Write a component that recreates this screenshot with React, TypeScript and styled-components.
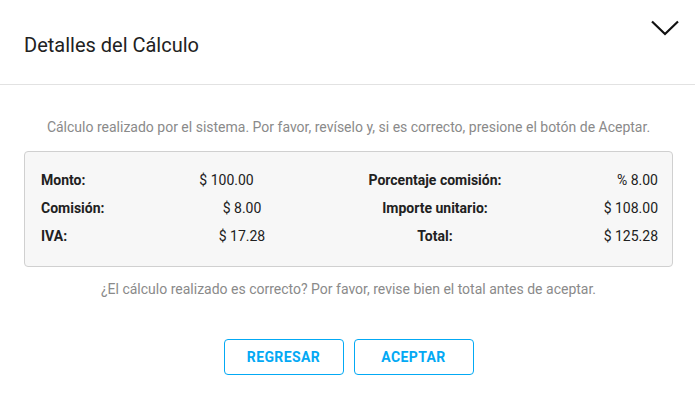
import React from "react";
import styled, { createGlobalStyle } from "styled-components";

const Global = createGlobalStyle`
  html, body { margin: 0; padding: 0; background: #fff; }
  body { font-family: Roboto, "Liberation Sans", Arial, sans-serif; }
  * { box-sizing: border-box; }
`;

const Dialog = styled.div`
  width: 695px;
  height: 404px;
  background: #fff;
  display: flex;
  flex-direction: column;
`;

const Header = styled.header`
  height: 85px;
  border-bottom: 1px solid #e2e2e2;
  display: flex;
  justify-content: space-between;
  align-items: flex-start;
  padding: 0 14px 0 24px;
`;

const Title = styled.h2`
  margin: 0;
  padding-top: 32px;
  font-size: 20px;
  font-weight: 400;
  line-height: 26px;
  color: #212121;
`;

const Toggle = styled.button`
  border: 0;
  background: none;
  padding: 0;
  margin-top: 18px;
  width: 32px;
  height: 20px;
  cursor: pointer;
  display: flex;
  align-items: center;
  justify-content: center;
`;

const Body = styled.div`
  display: flex;
  flex-direction: column;
  align-items: center;
  padding: 33px 22px 0 24px;
`;

const Note = styled.p<{ $mt?: number }>`
  margin: ${(p) => p.$mt ?? 0}px 0 0;
  font-size: 14px;
  line-height: 18px;
  color: #8a8a8a;
  text-align: center;
`;

const Summary = styled.div`
  align-self: stretch;
  margin-top: 15px;
  background: #f7f7f7;
  border: 1px solid #d0d0d0;
  border-radius: 4px;
  padding: 14px 14px 16px 16px;
  display: grid;
  grid-template-columns: 94px 214px 172px 1fr;
  grid-auto-rows: 28px;
  align-items: center;
  font-size: 14px;
  color: #212121;
`;

const Label = styled.span<{ $center?: boolean }>`
  font-weight: 700;
  text-align: ${(p) => (p.$center ? "center" : "left")};
`;

const Value = styled.span<{ $align?: "center" | "right"; $nudge?: number }>`
  text-align: ${(p) => p.$align ?? "center"};
  padding-right: ${(p) => p.$nudge ?? 0}px;
`;

const Actions = styled.div`
  display: flex;
  gap: 10px;
  margin-top: 41px;
`;

const Button = styled.button`
  width: 120px;
  height: 36px;
  background: #fff;
  border: 1px solid #03a9f4;
  border-radius: 4px;
  color: #03a9f4;
  font-family: Roboto, "Liberation Sans", Arial, sans-serif;
  font-size: 14px;
  font-weight: 700;
  letter-spacing: 0.4px;
  cursor: pointer;
`;

const rows: [string, string, number, string, string][] = [
  ["Monto:", "$ 100.00", 31, "Porcentaje comisión:", "% 8.00"],
  ["Comisión:", "$ 8.00", 0, "Importe unitario:", "$ 108.00"],
  ["IVA:", "$ 17.28", 0, "Total:", "$ 125.28"],
];

export default function App() {
  return (
    <Dialog>
      <Global />
      <Header>
        <Title>Detalles del Cálculo</Title>
        <Toggle aria-label="Contraer">
          <svg width="30" height="16" viewBox="0 0 30 16" fill="none">
            <path d="M2 1.5 L15 14 L28 1.5" stroke="#111" strokeWidth="2.2" />
          </svg>
        </Toggle>
      </Header>
      <Body>
        <Note>
          Cálculo realizado por el sistema. Por favor, revíselo y, si es correcto, presione el botón de Aceptar.
        </Note>
        <Summary>
          {rows.map(([l1, v1, n, l2, v2]) => (
            <React.Fragment key={l1}>
              <Label>{l1}</Label>
              <Value $nudge={n}>{v1}</Value>
              <Label $center>{l2}</Label>
              <Value $align="right">{v2}</Value>
            </React.Fragment>
          ))}
        </Summary>
        <Note $mt={13}>
          ¿El cálculo realizado es correcto? Por favor, revise bien el total antes de aceptar.
        </Note>
        <Actions>
          <Button>REGRESAR</Button>
          <Button>ACEPTAR</Button>
        </Actions>
      </Body>
    </Dialog>
  );
}
